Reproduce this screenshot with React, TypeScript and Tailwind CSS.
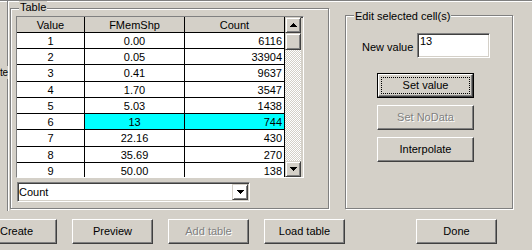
import React from 'react';

const etched = "border border-[#808080] shadow-[inset_1px_1px_0_#fff,1px_1px_0_#fff]";
const sunken = "border border-t-[#808080] border-l-[#808080] border-b-white border-r-white shadow-[inset_1px_1px_0_#404040,inset_-1px_-1px_0_#d4d0c8]";
const raisedBtn = "border border-t-white border-l-white border-b-[#404040] border-r-[#404040] shadow-[inset_-1px_-1px_0_#808080]";
const raisedArrow = "border border-t-[#d4d0c8] border-l-[#d4d0c8] border-b-[#404040] border-r-[#404040] shadow-[inset_1px_1px_0_#fff,inset_-1px_-1px_0_#808080]";

const rows = [
  { v: '1', f: '0.00', c: '6116', h: 'h-[16px]' },
  { v: '2', f: '0.05', c: '33904', h: 'h-[16px]' },
  { v: '3', f: '0.41', c: '9637', h: 'h-[17px]' },
  { v: '4', f: '1.70', c: '3547', h: 'h-[16px]' },
  { v: '5', f: '5.03', c: '1438', h: 'h-[16px]' },
  { v: '6', f: '13', c: '744', h: 'h-[16px]', sel: true },
  { v: '7', f: '22.16', c: '430', h: 'h-[17px]' },
  { v: '8', f: '35.69', c: '270', h: 'h-[16px]' },
  { v: '9', f: '50.00', c: '138', h: 'h-[16px]' },
];

function UpArrow() {
  return (
    <svg width="7" height="4" viewBox="0 0 7 4" className="block">
      <path d="M3 0h1v1h1v1h1v1h1v1H0V3h1V2h1V1h1z" fill="#000" />
    </svg>
  );
}
function DownArrow() {
  return (
    <svg width="7" height="4" viewBox="0 0 7 4" className="block">
      <path d="M0 0h7v1H6v1H5v1H4v1H3V3H2V2H1V1H0z" fill="#000" />
    </svg>
  );
}

function Btn({ label, w, disabled }: { label: string; w: string; disabled?: boolean }) {
  return (
    <div className={`${w} h-[25px] ${raisedBtn} flex items-center justify-center flex-none`}>
      <span className={disabled ? "text-[#808080] [text-shadow:1px_1px_0_#fff]" : "text-black"}>{label}</span>
    </div>
  );
}

export default function App() {
  return (
    <div className="w-[532px] h-[250px] overflow-hidden bg-[#d4d0c8] font-['Liberation_Sans',Arial,sans-serif] text-[11px] leading-[13px] text-black select-none">
      {/* top etched line */}
      <div className="h-[1px] bg-[#808080] shadow-[0_1px_0_#fff]" />
      <div className="flex items-start">
        {/* left clipped panel */}
        <div className="flex w-[10px] flex-none">
          <div className="w-[7px] h-[210px] flex flex-col items-start">
            <div className="mt-[65px] whitespace-nowrap text-[10px] tracking-[-0.3px] bg-[#d4d0c8] relative z-10">te</div>
          </div>
          <div className="w-[1px] h-[210px] bg-[#808080] shadow-[1px_0_0_#fff]" />
        </div>

        {/* Table group */}
        <div className={`relative mt-[7px] w-[319px] h-[201px] flex-none ${etched}`}>
          <div className="absolute left-[8px] top-[-8px] px-[1px] bg-[#d4d0c8]">Table</div>
          <div className="ml-[5px] mt-[7px]">
            <div className={`w-[288px] h-[162px] ${sunken} flex`}>
              <div className="w-[268px] flex flex-col overflow-hidden">
                <div className="flex h-[16px] flex-none border-b border-black bg-[#d4d0c8]">
                  <div className="w-[68px] border-r border-black flex justify-center pt-[2px]">Value</div>
                  <div className="w-[100px] border-r border-black flex justify-center pt-[2px]">FMemShp</div>
                  <div className="w-[100px] border-r border-black flex justify-center pt-[2px]">Count</div>
                </div>
                {rows.map((r) => (
                  <div key={r.v} className={`flex ${r.h} flex-none border-b border-black`}>
                    <div className="w-[68px] border-r border-black bg-white flex justify-center pt-[2px]">{r.v}</div>
                    <div className={`w-[100px] border-r border-black flex justify-center pt-[2px] ${r.sel ? 'bg-[#00ffff]' : 'bg-white'}`}>{r.f}</div>
                    <div className={`w-[100px] border-r border-black flex justify-end pr-[2px] pt-[2px] ${r.sel ? 'bg-[#00ffff]' : 'bg-white'}`}>{r.c}</div>
                  </div>
                ))}
              </div>
              <div className="w-[16px] flex flex-col">
                <div className={`h-[16px] flex-none ${raisedArrow} flex items-center justify-center`}>
                  <UpArrow />
                </div>
                <div className={`h-[17px] flex-none ${raisedArrow}`} />
                <div className="flex-1 bg-[image:repeating-conic-gradient(#ffffff_0%_25%,#d4d0c8_0%_50%)] bg-[length:2px_2px]" />
                <div className={`h-[16px] flex-none ${raisedArrow} flex items-center justify-center`}>
                  <DownArrow />
                </div>
              </div>
            </div>
            {/* combo */}
            <div className={`ml-[1px] mt-[4px] w-[233px] h-[20px] ${sunken} bg-white flex items-center`}>
              <div className="flex-1 pl-[1px]">Count</div>
              <div className={`w-[16px] h-[16px] mr-[1px] ${raisedArrow} flex items-center justify-center`}>
                <DownArrow />
              </div>
            </div>
          </div>
        </div>

        {/* Edit group */}
        <div className={`relative ml-[16px] mt-[14px] w-[168px] h-[194px] flex-none ${etched}`}>
          <div className="absolute left-[8px] top-[-6px] px-[1px] bg-[#d4d0c8] whitespace-nowrap">Edit selected cell(s)</div>
          <div className="flex mt-[17px] pl-[16px]">
            <div className="w-[55px] pt-[8px] whitespace-nowrap">New value</div>
            <div className={`w-[73px] h-[25px] ${sunken} bg-white pl-[2px] pt-[1px]`}>13</div>
          </div>
          <div className="ml-[31px] mt-[15px] flex flex-col gap-[7px]">
            <div className="w-[97px] h-[25px] border border-black flex">
              <div className={`flex-1 ${raisedBtn} flex items-center justify-center outline-1 outline-dotted outline-black outline-offset-[-4px]`}>
                Set value
              </div>
            </div>
            <Btn label="Set NoData" w="w-[97px]" disabled />
            <Btn label="Interpolate" w="w-[97px]" />
          </div>
        </div>
      </div>

      {/* bottom buttons */}
      <div className="flex mt-[8px] ml-[-24px] gap-[15px]">
        <Btn label="Create" w="w-[81px]" />
        <Btn label="Preview" w="w-[81px]" />
        <Btn label="Add table" w="w-[81px]" disabled />
        <Btn label="Load table" w="w-[81px]" />
        <div className="ml-[56px]">
          <Btn label="Done" w="w-[81px]" />
        </div>
      </div>
    </div>
  );
}
